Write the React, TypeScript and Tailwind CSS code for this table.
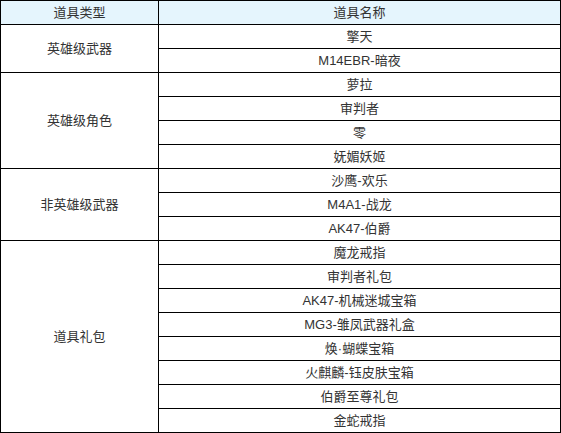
import React from "react";

const groups: { type: string; items: string[] }[] = [
  { type: "英雄级武器", items: ["擎天", "M14EBR-暗夜"] },
  { type: "英雄级角色", items: ["萝拉", "审判者", "零", "妩媚妖姬"] },
  { type: "非英雄级武器", items: ["沙鹰-欢乐", "M4A1-战龙", "AK47-伯爵"] },
  {
    type: "道具礼包",
    items: [
      "魔龙戒指",
      "审判者礼包",
      "AK47-机械迷城宝箱",
      "MG3-雏凤武器礼盒",
      "焕·蝴蝶宝箱",
      "火麒麟-钰皮肤宝箱",
      "伯爵至尊礼包",
      "金蛇戒指",
    ],
  },
];

const font = { fontFamily: '"Liberation Sans", "Noto Sans CJK SC", sans-serif' };

export default function App() {
  return (
    <div className="w-[561px] h-[433px] bg-white" style={font}>
      <table className="w-[561px] border-collapse table-fixed text-[13px] text-[#333] leading-none">
        <colgroup>
          <col className="w-[158px]" />
          <col />
        </colgroup>
        <thead>
          <tr className="h-[24px] bg-[#e5f5fd]">
            <th className="border border-black p-0 font-normal text-center align-middle">道具类型</th>
            <th className="border border-black p-0 font-normal text-center align-middle">道具名称</th>
          </tr>
        </thead>
        <tbody>
          {groups.map((g) =>
            g.items.map((it, i) => (
              <tr key={g.type + it} className="h-[24px]">
                {i === 0 && (
                  <td rowSpan={g.items.length} className="border border-black p-0 text-center align-middle">
                    {g.type}
                  </td>
                )}
                <td className="border border-black p-0 text-center align-middle">{it}</td>
              </tr>
            ))
          )}
        </tbody>
      </table>
    </div>
  );
}
